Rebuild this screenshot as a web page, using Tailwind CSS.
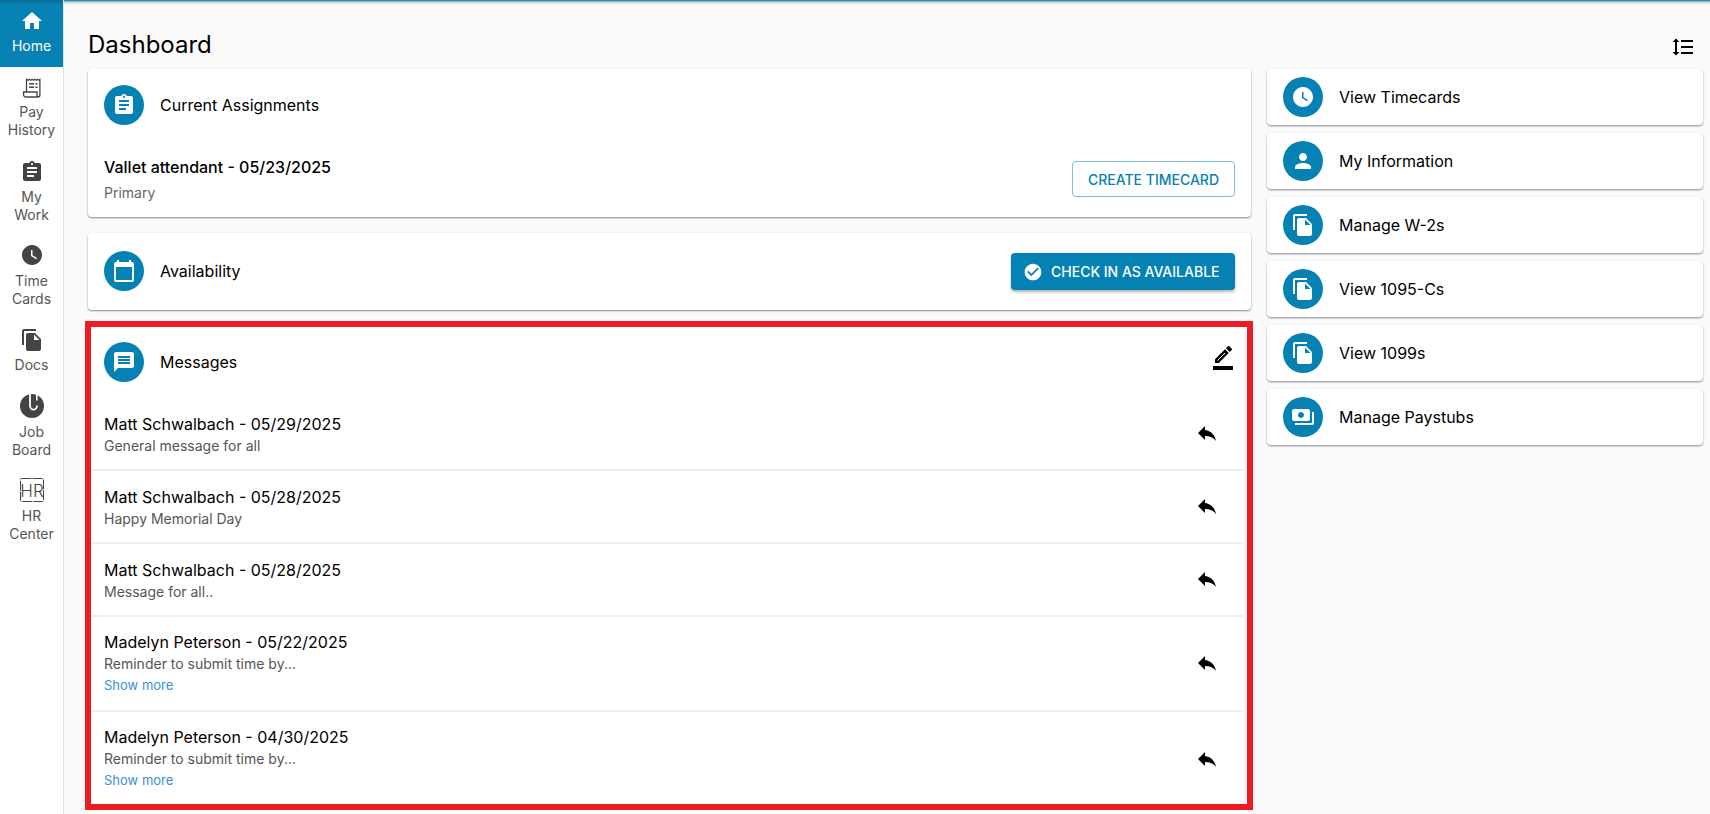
<!DOCTYPE html>
<html>
<head>
<meta charset="utf-8">
<title>Dashboard</title>
<script src="https://cdn.jsdelivr.net/npm/@tailwindcss/browser@4"></script>
</head>
<body class="h-[814px] overflow-hidden bg-[#fafafa] font-['Inter',sans-serif] text-black">
<div class="flex h-[814px]">
  <aside class="w-[64px] shrink-0 bg-white border-r border-[#e2e2e2] text-[14px] leading-[18px] text-[#555] text-center">
    <div class="h-[67px] bg-[linear-gradient(#05688f,#0681b4_4px)] text-white flex flex-col items-center pt-[9px] gap-[4px]">
      <svg class="w-6 h-6" viewBox="0 0 24 24" fill="currentColor"><path d="M10 20v-6h4v6h5v-8h3L12 3 2 12h3v8z"/></svg>
      <span>Home</span>
    </div>
    <div class="flex flex-col items-center pt-[9px]">
      <svg class="w-6 h-6 mb-[3px] text-[#444]" viewBox="0 0 24 24" fill="none" stroke="currentColor" stroke-width="1.3"><path d="M6.5 16V3.2l1.4 1 1.4-1 1.4 1 1.4-1 1.4 1 1.4-1 1.4 1 1.4-1 1.4 1 .8-.6V19a2 2 0 0 1-2 2H6a2.5 2.5 0 0 1-2.5-2.5V16H17v3a2 2 0 0 0 2 2"/><path fill="currentColor" stroke="none" d="M9 7h5v1.5H9zm6.5 0h2v1.5h-2zM9 10.500h5V12H9zm6.500 0h2V12h-2z"/></svg>
      <span>Pay<br>History</span>
    </div>
    <div class="flex flex-col items-center pt-[21px]">
      <svg class="w-6 h-6 mb-[4px] text-[#444]" viewBox="0 0 24 24" fill="currentColor"><path d="M19 3h-4.18C14.4 1.84 13.3 1 12 1c-1.3 0-2.4.84-2.82 2H5c-1.1 0-2 .9-2 2v14c0 1.1.9 2 2 2h14c1.1 0 2-.9 2-2V5c0-1.1-.9-2-2-2zm-7 0c.55 0 1 .45 1 1s-.45 1-1 1-1-.45-1-1 .45-1 1-1zm2 14H7v-2h7v2zm3-4H7v-2h10v2zm0-4H7V7h10v2z"/></svg>
      <span>My<br>Work</span>
    </div>
    <div class="flex flex-col items-center pt-[19px]">
      <svg class="w-6 h-6 mb-[5px] text-[#444]" viewBox="0 0 24 24" fill="currentColor"><path d="M12 2C6.5 2 2 6.5 2 12s4.5 10 10 10 10-4.5 10-10S17.5 2 12 2zm4.2 14.2L11 13V7h1.5v5.2l4.5 2.7-.8 1.3z"/></svg>
      <span>Time<br>Cards</span>
    </div>
    <div class="flex flex-col items-center pt-[20px]">
      <svg class="w-6 h-6 mb-[4px] text-[#444]" viewBox="0 0 24 24" fill="currentColor"><path d="M16 1H4c-1.1 0-2 .9-2 2v14h2V3h12V1zm-1 4l6 6v10c0 1.1-.9 2-2 2H7.99C6.89 23 6 22.1 6 21l.01-14c0-1.1.89-2 1.99-2h7zm-1 7h5.5L14 6.5V12z"/></svg>
      <span>Docs</span>
    </div>
    <div class="flex flex-col items-center pt-[20px]">
      <svg class="w-6 h-6 mb-[5px] text-[#444]" viewBox="0 0 24 24" fill="none"><circle cx="12" cy="12" r="12" fill="currentColor"/><path d="M10 -1V11.500a3.500 4.200 0 0 0 7 0" stroke="#fff" stroke-width="1.800"/><path d="M16.800 -1V6.500" stroke="#fff" stroke-width="1.600"/></svg>
      <span>Job<br>Board</span>
    </div>
    <div class="flex flex-col items-center pt-[19px]">
      <svg class="w-6 h-6 mb-[5px] text-[#444]" viewBox="0 0 24 24" fill="none"><rect x="0.5" y="0.5" width="23" height="23" rx="1" stroke="currentColor" stroke-width="1" stroke-dasharray="10 1"/><text x="12" y="18.500" text-anchor="middle" font-family="Inter, sans-serif" font-size="17" font-weight="300" fill="currentColor">HR</text></svg>
      <span>HR<br>Center</span>
    </div>
  </aside>

  <main class="flex-1 min-w-0 pl-[24px] pr-[7px] bg-[linear-gradient(#0a7ca8,#4f9dbd_1px,#c9cfd2_2px,#fafafa_5px)]">
    <header class="h-[69px] flex items-center justify-between pt-[25px] pr-[8px]">
      <h1 class="text-[24px] leading-[32px] mb-[5px]">Dashboard</h1>
      <svg class="w-6 h-6" viewBox="0 0 24 24" fill="currentColor"><path d="M6 7h2.5L5 3.5 1.5 7H4v10H1.5L5 20.5 8.5 17H6V7zm4-2v2h12V5H10zm0 14h12v-2H10v2zm0-6h12v-2H10v2z"/></svg>
    </header>
    <div class="flex gap-[16px] items-start">
      <div class="w-[1163px] shrink-0 flex flex-col">
        <section class="h-[148px] bg-white rounded-[4px] shadow-[0_1px_2px_rgba(0,0,0,0.45)] px-[16px] pt-[16px]">
          <div class="flex items-center gap-[16px]">
            <span class="w-10 h-10 rounded-full bg-[#0681b4] text-white flex items-center justify-center"><svg class="w-6 h-6" viewBox="0 0 24 24" fill="currentColor"><path d="M19 3h-4.18C14.4 1.84 13.3 1 12 1c-1.3 0-2.4.84-2.82 2H5c-1.1 0-2 .9-2 2v14c0 1.1.9 2 2 2h14c1.1 0 2-.9 2-2V5c0-1.1-.9-2-2-2zm-7 0c.55 0 1 .45 1 1s-.45 1-1 1-1-.45-1-1 .45-1 1-1zm2 14H7v-2h7v2zm3-4H7v-2h10v2zm0-4H7V7h10v2z"/></svg></span>
            <span class="text-[16px]">Current Assignments</span>
          </div>
          <div class="flex items-center justify-between mt-[30px]">
            <div>
              <div class="text-[16px] leading-[24px] font-medium">Vallet attendant - 05/23/2025</div>
              <div class="text-[14px] leading-[20px] text-[#666] mt-[4px]">Primary</div>
            </div>
            <button class="w-[163px] h-[36px] rounded-[4px] border border-[#7fbcd7] text-[#0681b4] text-[14px] font-medium">CREATE TIMECARD</button>
          </div>
        </section>

        <section class="h-[77px] mt-[16px] bg-white rounded-[4px] shadow-[0_1px_2px_rgba(0,0,0,0.45)] px-[16px] flex items-center justify-between">
          <div class="flex items-center gap-[16px] -mt-[1px]">
            <span class="w-10 h-10 rounded-full bg-[#0681b4] text-white flex items-center justify-center"><svg class="w-6 h-6" viewBox="0 0 24 24" fill="currentColor"><path d="M20 3h-1V1h-2v2H7V1H5v2H4c-1.1 0-2 .9-2 2v16c0 1.1.9 2 2 2h16c1.1 0 2-.9 2-2V5c0-1.1-.9-2-2-2zm0 18H4V8h16v13z"/></svg></span>
            <span class="text-[16px]">Availability</span>
          </div>
          <button class="w-[224px] h-[37px] rounded-[4px] bg-[#0681b4] text-white text-[14px] font-medium pl-[12px] flex items-center gap-[8px] shadow-[0_2px_3px_rgba(0,0,0,0.3)]">
            <svg class="w-5 h-5" viewBox="0 0 24 24" fill="currentColor"><path d="M12 2C6.48 2 2 6.48 2 12s4.48 10 10 10 10-4.48 10-10S17.52 2 12 2zm-2 15l-5-5 1.41-1.41L10 14.17l7.59-7.59L19 8l-9 9z"/></svg>
            CHECK IN AS AVAILABLE
          </button>
        </section>

        <section class="mt-[11px] bg-white pb-[20px]">
          <div class="-mx-[3px] w-[1168px] border-[6px] border-[#ed1c24] bg-white h-[489px]">
            <div class="h-[71px] flex items-center justify-between pl-[13px] pr-[12px] pb-[1px]">
              <div class="flex items-center gap-[16px]">
                <span class="w-10 h-10 rounded-full bg-[#0681b4] text-white flex items-center justify-center"><svg class="w-6 h-6" viewBox="0 0 24 24" fill="currentColor"><path d="M20 2H4c-1.1 0-1.99.9-1.99 2L2 22l4-4h14c1.1 0 2-.9 2-2V4c0-1.1-.9-2-2-2zm-2 12H6v-2h12v2zm0-3H6V9h12v2zm0-3H6V6h12v2z"/></svg></span>
                <span class="text-[16px]">Messages</span>
              </div>
              <svg class="w-6 h-6 -mt-[8px]" viewBox="0 0 24 24" fill="currentColor"><path d="M17.750 7 14 3.250l-10 10V17h3.750l10-10zm2.960-2.960c.39-.39.39-1.020 0-1.410L18.370.29c-.39-.39-1.020-.39-1.410 0L15 2.250 18.750 6l1.960-1.960z"/><path d="M2 20h20v4H2z"/><path d="M6.500 14.500 14 7" stroke="#fff" stroke-width="1"/></svg>
            </div>
            <div class="pr-[4px]">
              <div class="h-[73px] pt-[2px] border-b-2 border-[#eeeeee] flex items-center justify-between pl-[13px] pr-[24px]">
                <div><div class="text-[16px] leading-[22px]">Matt Schwalbach - 05/29/2025</div><div class="text-[14px] leading-[22px] text-[#555]">General message for all</div></div>
                <svg class="w-6 h-6 -mt-[4px]" viewBox="0 0 24 24" fill="currentColor"><path d="M10 9V5l-7 7 7 7v-4.100c5 0 8.500 1.600 11 5.100-1-5-4-10-11-11z"/></svg>
              </div>
              <div class="h-[73px] pt-[2px] border-b-2 border-[#eeeeee] flex items-center justify-between pl-[13px] pr-[24px]">
                <div><div class="text-[16px] leading-[22px]">Matt Schwalbach - 05/28/2025</div><div class="text-[14px] leading-[22px] text-[#555]">Happy Memorial Day</div></div>
                <svg class="w-6 h-6 -mt-[4px]" viewBox="0 0 24 24" fill="currentColor"><path d="M10 9V5l-7 7 7 7v-4.100c5 0 8.500 1.600 11 5.100-1-5-4-10-11-11z"/></svg>
              </div>
              <div class="h-[73px] pt-[2px] border-b-2 border-[#eeeeee] flex items-center justify-between pl-[13px] pr-[24px]">
                <div><div class="text-[16px] leading-[22px]">Matt Schwalbach - 05/28/2025</div><div class="text-[14px] leading-[22px] text-[#555]">Message for all..</div></div>
                <svg class="w-6 h-6 -mt-[4px]" viewBox="0 0 24 24" fill="currentColor"><path d="M10 9V5l-7 7 7 7v-4.100c5 0 8.500 1.600 11 5.100-1-5-4-10-11-11z"/></svg>
              </div>
              <div class="h-[95px] border-b-2 border-[#eeeeee] flex items-center justify-between pl-[13px] pr-[24px]">
                <div class="-mt-[1px]"><div class="text-[16px] leading-[22px]">Madelyn Peterson - 05/22/2025</div><div class="text-[14px] leading-[22px] text-[#555]">Reminder to submit time by...</div><div class="text-[13px] leading-[20px] text-[#3b8ee0]">Show more</div></div>
                <svg class="w-6 h-6 -mt-[1px]" viewBox="0 0 24 24" fill="currentColor"><path d="M10 9V5l-7 7 7 7v-4.100c5 0 8.500 1.600 11 5.100-1-5-4-10-11-11z"/></svg>
              </div>
              <div class="h-[93px] flex items-center justify-between pl-[13px] pr-[24px]">
                <div class="-mt-[1px]"><div class="text-[16px] leading-[22px]">Madelyn Peterson - 04/30/2025</div><div class="text-[14px] leading-[22px] text-[#555]">Reminder to submit time by...</div><div class="text-[13px] leading-[20px] text-[#3b8ee0]">Show more</div></div>
                <svg class="w-6 h-6" viewBox="0 0 24 24" fill="currentColor"><path d="M10 9V5l-7 7 7 7v-4.100c5 0 8.500 1.600 11 5.100-1-5-4-10-11-11z"/></svg>
              </div>
            </div>
          </div>
        </section>
      </div>

      <div class="flex-1 min-w-0 flex flex-col gap-[8px]">
        <a class="h-[56px] bg-white rounded-[4px] shadow-[0_1px_2px_rgba(0,0,0,0.45)] flex items-center gap-[16px] px-[16px] text-[16px]">
          <span class="w-10 h-10 rounded-full bg-[#0681b4] text-white flex items-center justify-center"><svg class="w-6 h-6" viewBox="0 0 24 24" fill="currentColor"><path d="M12 2C6.500 2 2 6.500 2 12s4.500 10 10 10 10-4.500 10-10S17.500 2 12 2zm4.200 14.200L11 13V7h1.500v5.200l4.500 2.700-.8 1.300z"/></svg></span>View Timecards</a>
        <a class="h-[56px] bg-white rounded-[4px] shadow-[0_1px_2px_rgba(0,0,0,0.45)] flex items-center gap-[16px] px-[16px] text-[16px]">
          <span class="w-10 h-10 rounded-full bg-[#0681b4] text-white flex items-center justify-center"><svg class="w-6 h-6" viewBox="0 0 24 24" fill="currentColor"><path d="M12 12c2.210 0 4-1.790 4-4s-1.790-4-4-4-4 1.790-4 4 1.790 4 4 4zm0 2c-2.670 0-8 1.340-8 4v2h16v-2c0-2.660-5.330-4-8-4z"/></svg></span>My Information</a>
        <a class="h-[56px] bg-white rounded-[4px] shadow-[0_1px_2px_rgba(0,0,0,0.45)] flex items-center gap-[16px] px-[16px] text-[16px]">
          <span class="w-10 h-10 rounded-full bg-[#0681b4] text-white flex items-center justify-center"><svg class="w-6 h-6" viewBox="0 0 24 24" fill="currentColor"><path d="M16 1H4c-1.100 0-2 .9-2 2v14h2V3h12V1zm-1 4l6 6v10c0 1.100-.9 2-2 2H7.990C6.890 23 6 22.100 6 21l.01-14c0-1.100.89-2 1.990-2h7zm-1 7h5.500L14 6.500V12z"/></svg></span>Manage W-2s</a>
        <a class="h-[56px] bg-white rounded-[4px] shadow-[0_1px_2px_rgba(0,0,0,0.45)] flex items-center gap-[16px] px-[16px] text-[16px]">
          <span class="w-10 h-10 rounded-full bg-[#0681b4] text-white flex items-center justify-center"><svg class="w-6 h-6" viewBox="0 0 24 24" fill="currentColor"><path d="M16 1H4c-1.100 0-2 .9-2 2v14h2V3h12V1zm-1 4l6 6v10c0 1.100-.9 2-2 2H7.990C6.890 23 6 22.100 6 21l.01-14c0-1.100.89-2 1.990-2h7zm-1 7h5.500L14 6.500V12z"/></svg></span>View 1095-Cs</a>
        <a class="h-[56px] bg-white rounded-[4px] shadow-[0_1px_2px_rgba(0,0,0,0.45)] flex items-center gap-[16px] px-[16px] text-[16px]">
          <span class="w-10 h-10 rounded-full bg-[#0681b4] text-white flex items-center justify-center"><svg class="w-6 h-6" viewBox="0 0 24 24" fill="currentColor"><path d="M16 1H4c-1.100 0-2 .9-2 2v14h2V3h12V1zm-1 4l6 6v10c0 1.100-.9 2-2 2H7.990C6.890 23 6 22.100 6 21l.01-14c0-1.100.89-2 1.990-2h7zm-1 7h5.500L14 6.500V12z"/></svg></span>View 1099s</a>
        <a class="h-[56px] bg-white rounded-[4px] shadow-[0_1px_2px_rgba(0,0,0,0.45)] flex items-center gap-[16px] px-[16px] text-[16px]">
          <span class="w-10 h-10 rounded-full bg-[#0681b4] text-white flex items-center justify-center"><svg class="w-6 h-6" viewBox="0 0 24 24" fill="currentColor"><path d="M19 14V6c0-1.100-.9-2-2-2H3c-1.100 0-2 .9-2 2v8c0 1.100.9 2 2 2h14c1.100 0 2-.9 2-2zm-9-1c-1.660 0-3-1.340-3-3s1.340-3 3-3 3 1.340 3 3-1.340 3-3 3zm13-6v11c0 1.100-.9 2-2 2H4v-2h17V7h2z"/></svg></span>Manage Paystubs</a>
      </div>
    </div>
  </main>
</div>
</body>
</html>
